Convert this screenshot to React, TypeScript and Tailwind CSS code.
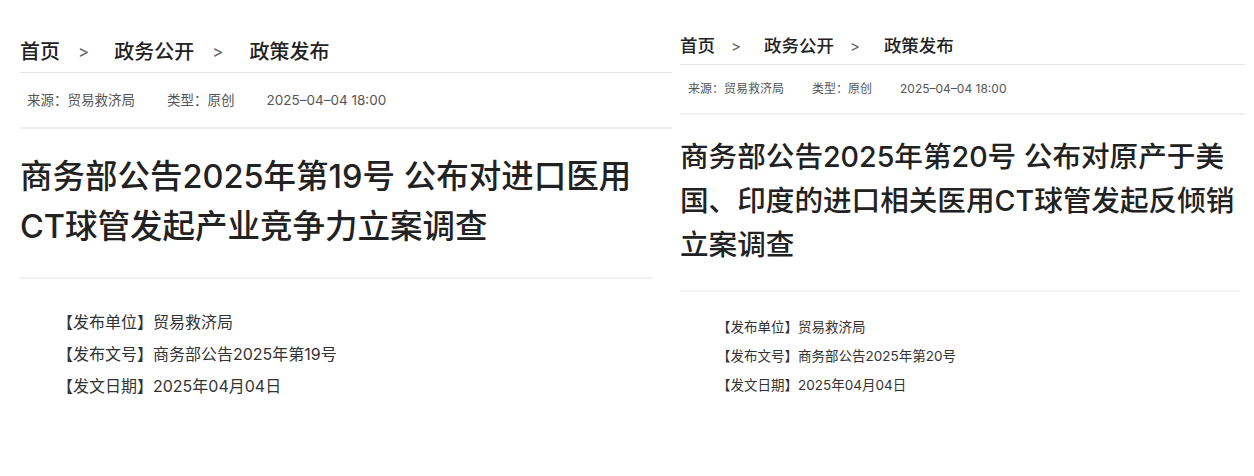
const font = { fontFamily: 'Inter, "Noto Sans CJK SC", sans-serif' };

export default function App() {
  return (
    <div
      className="flex w-[1254px] h-[476px] overflow-hidden bg-white text-[#222]"
      style={font}
    >
      {/* Left: 第19号 */}
      <section className="w-[672px] shrink-0 pl-5">
        <nav className="mt-[38px] flex h-[28px] items-center text-[20px] font-medium leading-none">
          <span>首页</span>
          <span className="ml-[18px] text-[17px] font-normal text-[#666]">&gt;</span>
          <span className="ml-[25px]">政务公开</span>
          <span className="ml-[18px] text-[17px] font-normal text-[#666]">&gt;</span>
          <span className="ml-[26px]">政策发布</span>
        </nav>
        <div className="mt-[6px] h-px bg-[#e6e6e6]" />
        <div className="flex h-[54px] items-center pl-[7px] text-[13.5px] text-[#555]">
          <span>来源：贸易救济局</span>
          <span className="ml-[32px]">类型：原创</span>
          <span className="ml-[32px]">2025–04–04 18:00</span>
        </div>
        <div className="h-[2px] bg-[#efefef]" />
        <h1 className="mt-[23px] text-[32.5px] font-medium leading-[50px] text-[#222]">
          商务部公告2025年第19号 公布对进口医用
          <br />
          CT球管发起产业竞争力立案调查
        </h1>
        <div className="mt-[25px] mr-5 h-[2px] bg-[#f0f0f0]" />
        <div className="mt-[27px] ml-[37px] text-[16px] leading-[32px] text-[#333]">
          <p>【发布单位】贸易救济局</p>
          <p>【发布文号】商务部公告2025年第19号</p>
          <p>【发文日期】2025年04月04日</p>
        </div>
      </section>

      {/* Right: 第20号 */}
      <section className="flex-1 pl-2 pr-[9px]">
        <nav className="mt-[34px] flex h-[24px] items-center text-[17.5px] font-medium leading-none">
          <span>首页</span>
          <span className="ml-[16px] text-[15px] font-normal text-[#666]">&gt;</span>
          <span className="ml-[23px]">政务公开</span>
          <span className="ml-[16px] text-[15px] font-normal text-[#666]">&gt;</span>
          <span className="ml-[24px]">政策发布</span>
        </nav>
        <div className="mt-[6px] h-px bg-[#e6e6e6]" />
        <div className="flex h-[48px] items-center pl-[8px] text-[12px] text-[#555]">
          <span>来源：贸易救济局</span>
          <span className="ml-[28px]">类型：原创</span>
          <span className="ml-[28px]">2025–04–04 18:00</span>
        </div>
        <div className="h-[2px] bg-[#efefef]" />
        <h1 className="mt-[20px] text-[28.6px] font-medium leading-[44px] text-[#222]">
          商务部公告2025年第20号 公布对原产于美
          <br />
          国、印度的进口相关医用CT球管发起反倾销
          <br />
          立案调查
        </h1>
        <div className="mt-[23px] mr-[5px] h-[2px] bg-[#f3f3f3]" />
        <div className="mt-[21px] ml-[37px] text-[13.5px] leading-[29px] text-[#333]">
          <p>【发布单位】贸易救济局</p>
          <p>【发布文号】商务部公告2025年第20号</p>
          <p>【发文日期】2025年04月04日</p>
        </div>
      </section>
    </div>
  );
}
